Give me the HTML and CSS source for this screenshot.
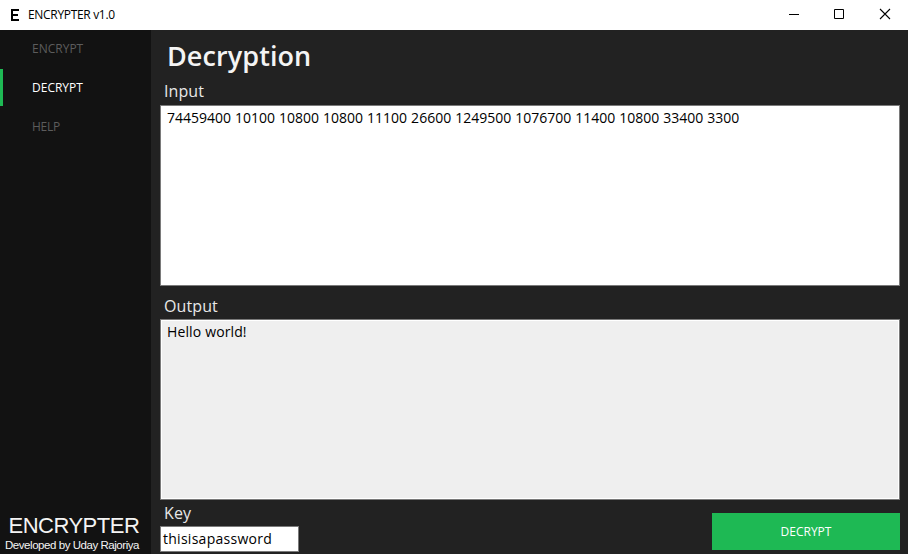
FILE: index.html
```html
<!DOCTYPE html>
<html lang="en">
<head>
<meta charset="utf-8">
<title>ENCRYPTER v1.0</title>
<link rel="stylesheet" href="styles.css">
</head>
<body>
<header class="titlebar">
  <svg class="app-icon" width="10" height="14" viewBox="0 0 10 14"><path d="M1 1h8v2H3v3h5v2H3v3h6v2H1z" fill="#000"/></svg>
  <span class="title">ENCRYPTER v1.0</span>
  <svg class="controls" width="138" height="30" viewBox="0 0 138 30" fill="none" stroke="#000"><path d="M19 14.5h10M64.500 9.500h9v9h-9z"/><path d="M110 9l10 10M120 9l-10 10" stroke-width="1.1"/></svg>
</header>
<div class="window">
  <aside class="sidebar">
    <nav>
      <a class="nav-item">ENCRYPT</a>
      <a class="nav-item active">DECRYPT</a>
      <a class="nav-item help">HELP</a>
    </nav>
    <footer>
      <div class="brand">ENCRYPTER</div>
      <div class="credit">Developed by Uday Rajoriya</div>
    </footer>
  </aside>
  <main>
    <h1><span>Decryption</span></h1>
    <label class="input-label">Input</label>
    <div class="box input">74459400 10100 10800 10800 11100 26600 1249500 1076700 11400 10800 33400 3300</div>
    <label class="output-label">Output</label>
    <div class="box output">Hello world!</div>
    <div class="bottom">
      <div>
        <label class="key-label">Key</label>
        <div class="key">thisisapassword</div>
      </div>
      <button><span>DECRYPT</span></button>
    </div>
  </main>
</div>
</body>
</html>
```

FILE: styles.css
```css
* { box-sizing: border-box; }
body {
  margin: 0;
  width: 908px;
  height: 554px;
  overflow: hidden;
  background: #222;
  font-family: "Open Sans", "Noto Sans", sans-serif;
}
.titlebar {
  display: flex;
  align-items: center;
  height: 30px;
  padding-left: 10px;
  background: #fff;
  color: #000;
}
.title { margin-left: 8px; font-size: 12px; line-height: 30px; letter-spacing: -0.32px; }
.controls { margin-left: auto; }
.window { display: flex; height: 524px; }
.sidebar {
  display: flex;
  flex-direction: column;
  justify-content: space-between;
  width: 151px;
  background: #121212;
}
.nav-item {
  display: block;
  height: 37px;
  margin-bottom: 2px;
  padding-left: 29px;
  border-left: 3px solid transparent;
  color: #5c5c5c;
  font-size: 12px;
  line-height: 37px;
  letter-spacing: 0;
}
.nav-item.help { letter-spacing: -0.3px; }
.nav-item.active { border-color: #1eb954; color: #fff; }
.brand { padding-left: 8.500px; height: 22px; color: #f4f4f4; font: 22px/22px "Liberation Sans", sans-serif; letter-spacing: -0.5px; white-space: nowrap; }
.credit { padding-left: 5px; height: 17px; color: #f4f4f4; font: 11.5px/16px "Liberation Sans", sans-serif; letter-spacing: -0.45px; white-space: nowrap; }
main { flex: 1; padding: 0 8px 0 9px; }
h1 { margin: 0; height: 50px; padding-left: 7px; color: #f4f4f4; font-size: 27px; font-weight: 600; line-height: 52px; letter-spacing: 0.08px; }
label { display: block; height: 25px; padding-left: 4px; color: #e8e8e8; font-size: 16px; line-height: 22px; letter-spacing: 0.1px; }
.box {
  height: 181px;
  padding: 1px 6px;
  border: 1px solid #7a7a7a;
  background: #fff;
  color: #000;
  font-size: 14px;
  line-height: 22px;
  word-spacing: 0.36px;
}
.output-label { height: 33px; line-height: 40px; }
.box.output { background: #efefef; box-shadow: inset 0 0 0 1px #fff; letter-spacing: 0.1px; }
.bottom { display: flex; justify-content: space-between; align-items: flex-start; }
.key-label { height: 26px; line-height: 26px; }
.key { width: 139px; height: 26px; padding-left: 2px; border: 1px solid #7a7a7a; background: #fff; color: #000; font-size: 14px; line-height: 24px; letter-spacing: 0.27px; }
button { width: 188px; height: 37px; margin-top: 13px; padding: 0; border: 0; background: #1eb954; color: #fff; font: 12px "Open Sans", sans-serif; letter-spacing: 0; }
```
